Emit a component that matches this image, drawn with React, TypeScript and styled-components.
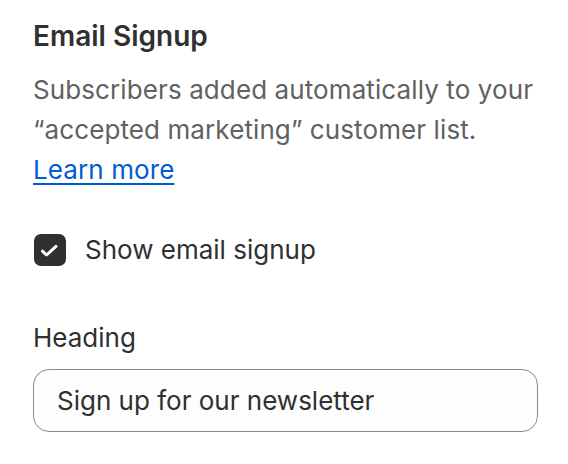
import { FC, useState } from "react";
import styled, { createGlobalStyle } from "styled-components";

const GlobalStyle = createGlobalStyle`
    body {
        margin: 0;
        background: #ffffff;
        font-family: Inter, "Noto Sans", sans-serif;
        -webkit-font-smoothing: antialiased;
    }
`;

export default function App() {
    const [checked, setChecked] = useState(true);
    const [heading, setHeading] = useState("Sign up for our newsletter");
    return (
        <>
            <GlobalStyle />
            <Panel>
                <Title>Email Signup</Title>
                <Description>
                    Subscribers added automatically to your “accepted marketing” customer list.{" "}
                    <a href="#">Learn more</a>
                </Description>
                <CheckRow onClick={() => setChecked(!checked)}>
                    <CheckBox checked={checked} />
                    <span>Show email signup</span>
                </CheckRow>
                <Field>
                    <Label>Heading</Label>
                    <TextInput value={heading} onChange={(e) => setHeading(e.target.value)} />
                </Field>
            </Panel>
        </>
    );
}

const CheckBox: FC<{ checked: boolean }> = ({ checked }) => (
    <Box $checked={checked}>
        {checked && (
            <svg width="32" height="32" viewBox="0 0 32 32" fill="none">
                <path d="M8.5 17.2l4 3.8 9.5-8.6" stroke="#ffffff" strokeWidth="3" strokeLinecap="round" strokeLinejoin="round" />
            </svg>
        )}
    </Box>
);

const Panel = styled.div`
    width: 505px;
    padding: 16px 0 0 33px;
    display: flex;
    flex-direction: column;
`;

const Title = styled.h2`
    margin: 0;
    font-size: 28px;
    line-height: 40px;
    font-weight: 600;
    color: #303030;
`;

const Description = styled.p`
    margin: 14px 0 0;
    font-size: 26px;
    line-height: 40px;
    letter-spacing: 0.1px;
    color: #616161;

    a {
        color: #005bd3;
        text-decoration: underline;
        text-underline-offset: 4px;
        text-decoration-thickness: 2px;
    }
`;

const CheckRow = styled.label`
    margin-top: 40px;
    display: flex;
    align-items: center;
    gap: 19px;
    font-size: 26px;
    line-height: 40px;
    color: #303030;
    cursor: pointer;
`;

const Box = styled.span<{ $checked: boolean }>`
    width: 32px;
    height: 32px;
    margin-left: 1px;
    box-sizing: border-box;
    border-radius: 7px;
    display: flex;
    align-items: center;
    justify-content: center;
    overflow: hidden;
    background: ${(p) => (p.$checked ? "#303030" : "#ffffff")};
    border: ${(p) => (p.$checked ? "none" : "2px solid #8a8a8a")};
`;

const Field = styled.div`
    margin-top: 48px;
    display: flex;
    flex-direction: column;
    gap: 11px;
`;

const Label = styled.label`
    font-size: 26px;
    line-height: 40px;
    color: #303030;
`;

const TextInput = styled.input`
    height: 63px;
    box-sizing: border-box;
    padding: 0 23px;
    border: 1.5px solid #8a8a8a;
    border-radius: 16px;
    background: #fdfdfd;
    font-family: Inter, "Noto Sans", sans-serif;
    font-size: 26px;
    color: #303030;
    outline: none;
`;
